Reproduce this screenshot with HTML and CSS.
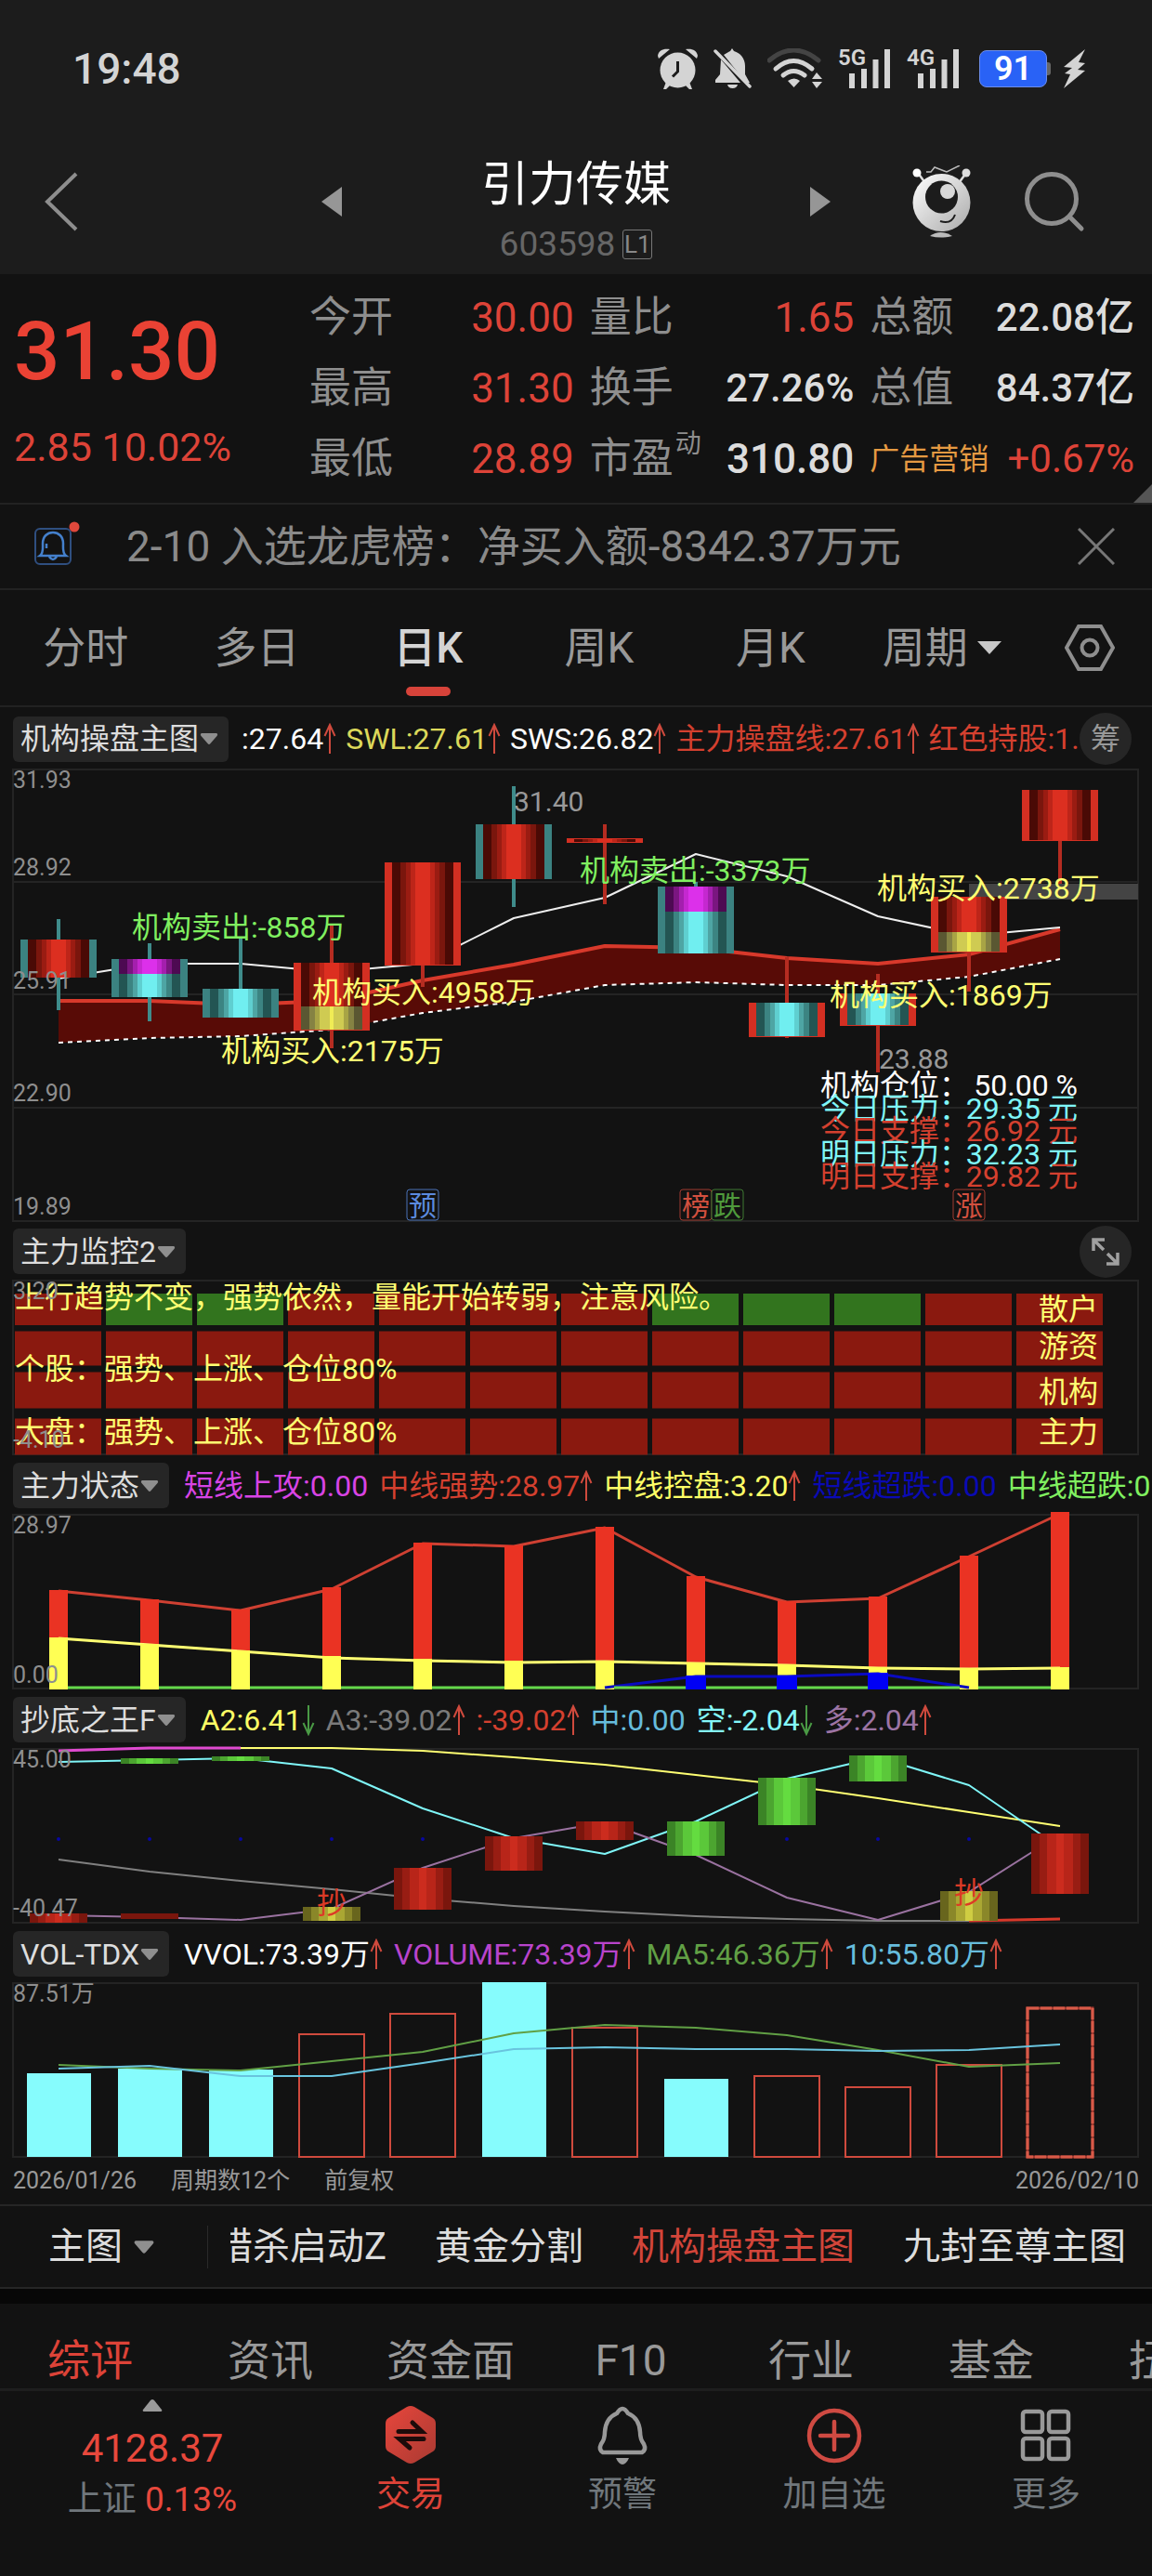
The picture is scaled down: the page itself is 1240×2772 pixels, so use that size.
FILE: index.html
```html
<!DOCTYPE html>
<html lang="zh-CN">
<head>
<meta charset="utf-8">
<meta name="viewport" content="width=device-width, initial-scale=1">
<title>引力传媒 603598</title>
<link rel="stylesheet" href="styles.css">
</head>
<body>
<svg class="defs" width="0" height="0" aria-hidden="true">
  <defs>
    <linearGradient id="red">
      <stop offset="0" stop-color="#4a0a05"/><stop offset=".13" stop-color="#4a0a05"/>
      <stop offset=".13" stop-color="#7a160d"/><stop offset=".22" stop-color="#7a160d"/>
      <stop offset=".22" stop-color="#9a1c12"/><stop offset=".3" stop-color="#9a1c12"/>
      <stop offset=".3" stop-color="#bd2519"/><stop offset=".38" stop-color="#bd2519"/>
      <stop offset=".38" stop-color="#dc2f20"/><stop offset=".62" stop-color="#dc2f20"/>
      <stop offset=".62" stop-color="#bd2519"/><stop offset=".7" stop-color="#bd2519"/>
      <stop offset=".7" stop-color="#9a1c12"/><stop offset=".78" stop-color="#9a1c12"/>
      <stop offset=".78" stop-color="#7a160d"/><stop offset=".87" stop-color="#7a160d"/>
      <stop offset=".87" stop-color="#4a0a05"/><stop offset="1" stop-color="#4a0a05"/>
    </linearGradient>
    <linearGradient id="cyan">
      <stop offset="0" stop-color="#235553"/><stop offset=".13" stop-color="#235553"/>
      <stop offset=".13" stop-color="#3c8482"/><stop offset=".22" stop-color="#3c8482"/>
      <stop offset=".22" stop-color="#4ea5a4"/><stop offset=".3" stop-color="#4ea5a4"/>
      <stop offset=".3" stop-color="#5fcfd0"/><stop offset=".38" stop-color="#5fcfd0"/>
      <stop offset=".38" stop-color="#70eef0"/><stop offset=".62" stop-color="#70eef0"/>
      <stop offset=".62" stop-color="#5fcfd0"/><stop offset=".7" stop-color="#5fcfd0"/>
      <stop offset=".7" stop-color="#4ea5a4"/><stop offset=".78" stop-color="#4ea5a4"/>
      <stop offset=".78" stop-color="#3c8482"/><stop offset=".87" stop-color="#3c8482"/>
      <stop offset=".87" stop-color="#235553"/><stop offset="1" stop-color="#235553"/>
    </linearGradient>
    <linearGradient id="magenta">
      <stop offset="0" stop-color="#4d0a52"/><stop offset=".13" stop-color="#4d0a52"/>
      <stop offset=".13" stop-color="#7a1680"/><stop offset=".22" stop-color="#7a1680"/>
      <stop offset=".22" stop-color="#a41fae"/><stop offset=".3" stop-color="#a41fae"/>
      <stop offset=".3" stop-color="#c528d0"/><stop offset=".38" stop-color="#c528d0"/>
      <stop offset=".38" stop-color="#dc30ea"/><stop offset=".62" stop-color="#dc30ea"/>
      <stop offset=".62" stop-color="#c528d0"/><stop offset=".7" stop-color="#c528d0"/>
      <stop offset=".7" stop-color="#a41fae"/><stop offset=".78" stop-color="#a41fae"/>
      <stop offset=".78" stop-color="#7a1680"/><stop offset=".87" stop-color="#7a1680"/>
      <stop offset=".87" stop-color="#4d0a52"/><stop offset="1" stop-color="#4d0a52"/>
    </linearGradient>
    <linearGradient id="olive">
      <stop offset="0" stop-color="#5a5732"/><stop offset=".13" stop-color="#5a5732"/>
      <stop offset=".13" stop-color="#858243"/><stop offset=".22" stop-color="#858243"/>
      <stop offset=".22" stop-color="#a8a445"/><stop offset=".3" stop-color="#a8a445"/>
      <stop offset=".3" stop-color="#cfcb52"/><stop offset=".47" stop-color="#cfcb52"/>
      <stop offset=".47" stop-color="#f0ec55"/><stop offset=".53" stop-color="#f0ec55"/>
      <stop offset=".53" stop-color="#cfcb52"/><stop offset=".7" stop-color="#cfcb52"/>
      <stop offset=".7" stop-color="#a8a445"/><stop offset=".78" stop-color="#a8a445"/>
      <stop offset=".78" stop-color="#858243"/><stop offset=".87" stop-color="#858243"/>
      <stop offset=".87" stop-color="#5a5732"/><stop offset="1" stop-color="#5a5732"/>
    </linearGradient>
    <linearGradient id="box-red">
      <stop offset="0" stop-color="#7a160d"/><stop offset=".14" stop-color="#7a160d"/>
      <stop offset=".14" stop-color="#981d13"/><stop offset=".28" stop-color="#981d13"/>
      <stop offset=".28" stop-color="#b82519"/><stop offset=".43" stop-color="#b82519"/>
      <stop offset=".43" stop-color="#cc2c1e"/><stop offset=".57" stop-color="#cc2c1e"/>
      <stop offset=".57" stop-color="#b82519"/><stop offset=".72" stop-color="#b82519"/>
      <stop offset=".72" stop-color="#981d13"/><stop offset=".86" stop-color="#981d13"/>
      <stop offset=".86" stop-color="#7a160d"/><stop offset="1" stop-color="#7a160d"/>
    </linearGradient>
    <linearGradient id="box-green">
      <stop offset="0" stop-color="#3b8426"/><stop offset=".14" stop-color="#3b8426"/>
      <stop offset=".14" stop-color="#4ca530"/><stop offset=".28" stop-color="#4ca530"/>
      <stop offset=".28" stop-color="#5bc83a"/><stop offset=".43" stop-color="#5bc83a"/>
      <stop offset=".43" stop-color="#64dc40"/><stop offset=".57" stop-color="#64dc40"/>
      <stop offset=".57" stop-color="#5bc83a"/><stop offset=".72" stop-color="#5bc83a"/>
      <stop offset=".72" stop-color="#4ca530"/><stop offset=".86" stop-color="#4ca530"/>
      <stop offset=".86" stop-color="#3b8426"/><stop offset="1" stop-color="#3b8426"/>
    </linearGradient>
    <linearGradient id="box-olive">
      <stop offset="0" stop-color="#68651d"/><stop offset=".14" stop-color="#68651d"/>
      <stop offset=".14" stop-color="#8a8729"/><stop offset=".28" stop-color="#8a8729"/>
      <stop offset=".28" stop-color="#aaa733"/><stop offset=".43" stop-color="#aaa733"/>
      <stop offset=".43" stop-color="#cfcd42"/><stop offset=".57" stop-color="#cfcd42"/>
      <stop offset=".57" stop-color="#aaa733"/><stop offset=".72" stop-color="#aaa733"/>
      <stop offset=".72" stop-color="#8a8729"/><stop offset=".86" stop-color="#8a8729"/>
      <stop offset=".86" stop-color="#68651d"/><stop offset="1" stop-color="#68651d"/>
    </linearGradient>
    <linearGradient id="silver" x1="0" y1="0" x2="1" y2="1">
      <stop offset="0" stop-color="#fff"/><stop offset="1" stop-color="#aaa"/>
    </linearGradient>
    <linearGradient id="trade" x1="0" y1="0" x2="1" y2="1">
      <stop offset="0" stop-color="#e8463c"/><stop offset="1" stop-color="#a93a32"/>
    </linearGradient>
    <symbol id="up" viewBox="0 0 14 34"><path d="M7 33V3M1.500 14L7 2l5.500 12" fill="none" stroke="#cf4a3d" stroke-width="2"/></symbol>
    <symbol id="down" viewBox="0 0 14 34"><path d="M7 1v30M1.500 20L7 32l5.500-12" fill="none" stroke="#4a9a45" stroke-width="2"/></symbol>
    <symbol id="caret" viewBox="0 0 22 14"><path d="M3 1h16q2 1 .5 3l-7 8q-1.500 2-3 0l-7-8Q1 2 3 1z" fill="#8f8f8f"/></symbol>
  </defs>
</svg>

<header class="top">
  <div class="status">
    <time class="clock">19:48</time>
    <div class="status-icons">
      <svg width="43" height="44" viewBox="0 0 43 44" aria-label="闹钟"><g fill="#d4d4d4"><circle cx="21.500" cy="23.500" r="19"/><path d="M0 8C1 2 6 0 13 1L1 11zM43 8C42 2 37 0 30 1l12 10zM9 36l-3 8h3l5-5zM34 36l3 8h-3l-5-5z"/></g><path d="M21.500 14v11l-5.500 5.500" fill="none" stroke="#1c1c1c" stroke-width="3"/></svg>
      <svg width="41" height="44" viewBox="0 0 41 44" aria-label="静音"><g fill="#d4d4d4"><path d="M11 7c3-2 5-3 7-4l2-3 2 3c7 2 12 8 12 16v9l5 9H35zM8 12l21 25H2v-3l5-6zM15 39h11q-1 4-5.500 4T15 39z"/></g><path d="M2 3l37 38" stroke="#d4d4d4" stroke-width="3.500" stroke-linecap="round"/></svg>
      <svg width="59" height="44" viewBox="0 0 59 44" aria-label="无线网络"><g fill="none" stroke-linecap="round"><path d="M2 13q26-22 53 0" stroke="#444" stroke-width="5"/><path d="M9 22q19-17 39 0M17 29q11-9 23 0" stroke="#d4d4d4" stroke-width="5"/></g><path d="M22 35q7-5 13 0l-6.500 7zM48 33l5-7 6 7zM48 36h11l-6 7z" fill="#d4d4d4"/></svg>
      <span class="signal"><b>5G</b><svg width="45" height="42" viewBox="0 0 45 42"><path d="M3 26v16M16 21v21M28.500 11v31M41 0v42" stroke="#d4d4d4" stroke-width="6"/></svg></span>
      <span class="signal"><b>4G</b><svg width="45" height="42" viewBox="0 0 45 42"><path d="M3 26v16M16 21v21M28.500 11v31M41 0v42" stroke="#d4d4d4" stroke-width="6"/></svg></span>
      <span class="battery">91</span>
      <svg width="26" height="42" viewBox="0 0 26 42" aria-label="充电"><path d="M24 0L1 19l9 1-8 6 6 1-7 15 23-19-8-1 8-7-7-1z" fill="#d4d4d4"/></svg>
    </div>
  </div>
  <nav class="title-bar">
    <button class="back" aria-label="返回"><svg width="36" height="64" viewBox="0 0 36 64"><path d="M34 2L3 32l31 30" fill="none" stroke="#8e8e8e" stroke-width="4"/></svg></button>
    <button class="prev" aria-label="上一只"><svg width="22" height="32" viewBox="0 0 22 32"><path d="M22 0v32L0 16z" fill="#969696"/></svg></button>
    <div class="title">
      <h1>引力传媒</h1>
      <p>603598<span class="level">L1</span></p>
    </div>
    <button class="next" aria-label="下一只"><svg width="22" height="32" viewBox="0 0 22 32"><path d="M0 0v32l22-16z" fill="#969696"/></svg></button>
    <button class="robot" aria-label="助手"><svg width="64" height="78" viewBox="0 0 64 78"><path d="M6 8l8 11M58 8L50 19" stroke="#ddd" stroke-width="2.500"/><circle cx="5" cy="8" r="4.500" fill="#fff"/><circle cx="58" cy="8" r="4.500" fill="#ddd"/><path d="M15 7h5l4-5 13 5 14-7" fill="none" stroke="#bbb" stroke-width="1.500"/><circle cx="31.500" cy="40" r="31" fill="url(#silver)"/><circle cx="31.500" cy="34" r="17.500" fill="#1c1c1c"/><circle cx="38" cy="28" r="8" fill="#d8d8d8"/><path d="M30 60q12 4 16-7" fill="none" stroke="#1c1c1c" stroke-width="2"/><path d="M19 76q11-8 24 0-12 3-24 0z" fill="#bbb"/></svg></button>
    <button class="search" aria-label="搜索"><svg width="66" height="66" viewBox="0 0 66 66"><circle cx="30" cy="30" r="26.500" fill="none" stroke="#8e8e8e" stroke-width="5"/><path d="M49 49l13 13" stroke="#8e8e8e" stroke-width="5" stroke-linecap="round"/></svg></button>
  </nav>
</header>

<main>
  <section class="quote">
    <div class="price">
      <strong>31.30</strong>
      <span>2.85 10.02%</span>
    </div>
    <dl class="stats">
      <div><dt>今开</dt><dd class="rise">30.00</dd></div>
      <div><dt>量比</dt><dd class="rise">1.65</dd></div>
      <div><dt>总额</dt><dd class="small">22.08亿</dd></div>
      <div><dt>最高</dt><dd class="rise">31.30</dd></div>
      <div><dt>换手</dt><dd class="small">27.26%</dd></div>
      <div><dt>总值</dt><dd class="small">84.37亿</dd></div>
      <div><dt>最低</dt><dd class="rise">28.89</dd></div>
      <div><dt>市盈<sup>动</sup></dt><dd>310.80</dd></div>
      <div><dt class="sector">广告营销</dt><dd class="rise small">+0.67%</dd></div>
    </dl>
    <i class="corner"></i>
  </section>

  <section class="notice">
    <svg width="52" height="50" viewBox="0 0 52 50" aria-hidden="true"><rect x="2" y="9" width="38" height="38" rx="5" fill="none" stroke="#2f4f80" stroke-width="2"/><path d="M7 38c4-3 3-8 3-13 0-8 5-12 11-12s11 4 11 12c0 5-1 10 3 13zM17 39q4 6 8 0M14 25v5" fill="none" stroke="#4480cc" stroke-width="2.500"/><circle cx="44" cy="7" r="5.500" fill="#e0483c"/></svg>
    <a href="#lhb">2-10 入选龙虎榜：净买入额-8342.37万元</a>
    <button aria-label="关闭"><svg width="40" height="40" viewBox="0 0 40 40"><path d="M1 1l38 38M39 1L1 39" stroke="#777" stroke-width="3"/></svg></button>
  </section>

  <nav class="periods">
    <button>分时</button>
    <button>多日</button>
    <button class="active">日K</button>
    <button>周K</button>
    <button>月K</button>
    <button>周期<svg width="26" height="14" viewBox="0 0 26 14"><path d="M0 0h26L13 14z" fill="#c8c8c8"/></svg></button>
    <button class="setting" aria-label="设置"><svg width="54" height="50" viewBox="0 0 54 50"><path d="M15 2h24l13 23-13 23H15L2 25z" fill="none" stroke="#8e8e8e" stroke-width="4"/><circle cx="27" cy="25" r="8.500" fill="none" stroke="#8e8e8e" stroke-width="4"/></svg></button>
  </nav>

  <section class="panel main-panel">
    <div class="panel-head">
      <button class="tag">机构操盘主图<svg><use href="#caret"/></svg></button>
      <div class="readout">
        <span class="c-white">:27.64<svg><use href="#up"/></svg></span>
        <span class="c-gold">SWL:27.61<svg><use href="#up"/></svg></span>
        <span class="c-white">SWS:26.82<svg><use href="#up"/></svg></span>
        <span class="c-red">主力操盘线:27.61<svg><use href="#up"/></svg></span>
        <span class="c-red">红色持股:1.00</span>
      </div>
      <button class="round">筹</button>
    </div>
    <svg class="chart" viewBox="0 0 1240 487">
      <g class="grid"><rect x="14" y="1" width="1211" height="486"/><path d="M14 122H1225M14 243H1225M14 365H1225"/></g>
      <rect x="1043" y="124" width="182" height="17" fill="#444"/>
      <path fill="#580b06" d="M63 250L161 250 259 254 357 250 455 228 553 211 651 191 749 193 847 204 945 210 1043 200 1141 173V205L1043 224 945 233 847 233 749 230 651 233 553 251 455 263 357 281 259 288 161 290 63 295z"/>
      <path class="line" stroke="#d8392b" stroke-width="4" d="M63 250L161 250 259 254 357 250 455 228 553 211 651 191 749 193 847 204 945 210 1043 200 1141 173"/>
      <path class="line" stroke="#fff" stroke-width="2" stroke-dasharray="5 5" d="M63 295L161 290 259 288 357 281 455 263 553 251 651 233 749 230 847 233 945 233 1043 224 1141 205"/>
      <path class="line" stroke="#eee" stroke-width="2" d="M63 226L161 210 259 210 357 219 455 210 553 161 651 139 749 92 847 116 945 159 1043 180 1141 171"/>
      <path stroke="#3f8c8b" stroke-width="4" d="M63 162V260M161 188V272M259 183V268M553 19V149M749 122V199"/>
      <path stroke="#b52c21" stroke-width="4" d="M357 169V301M455 101V235M651 60V146M847 203V290M945 221V327M1043 138V240M1141 23V124"/>
      <g fill="#3b8281"><rect x="22" y="184" width="82" height="41"/><rect x="120" y="205" width="82" height="41"/><rect x="218" y="237" width="82" height="31"/><rect x="512" y="60" width="82" height="59"/><rect x="708" y="127" width="82" height="72"/></g>
      <g fill="#d32f22"><rect x="316" y="209" width="82" height="73"/><rect x="414" y="101" width="82" height="111"/><rect x="610" y="75" width="82" height="5"/><rect x="806" y="252" width="82" height="37"/><rect x="904" y="242" width="82" height="35"/><rect x="1002" y="138" width="82" height="60"/><rect x="1100" y="23" width="82" height="55"/></g>
      <g fill="url(#red)"><rect x="30" y="184" width="66" height="41"/><rect x="324" y="209" width="66" height="47"/><rect x="422" y="101" width="66" height="110"/><rect x="520" y="60" width="66" height="59"/><rect x="618" y="76" width="66" height="3"/><rect x="1010" y="138" width="66" height="38"/><rect x="1108" y="23" width="66" height="54"/></g>
      <g fill="url(#cyan)"><rect x="128" y="221" width="66" height="25"/><rect x="226" y="237" width="66" height="31"/><rect x="716" y="154" width="66" height="45"/><rect x="814" y="252" width="66" height="36"/><rect x="912" y="242" width="66" height="34"/></g>
      <g fill="url(#magenta)"><rect x="128" y="205" width="66" height="16"/><rect x="716" y="127" width="66" height="27"/></g>
      <g fill="url(#olive)"><rect x="324" y="256" width="66" height="25"/><rect x="1010" y="176" width="66" height="21"/></g>
      <g class="axis"><text x="14" y="21">31.93</text><text x="14" y="115">28.92</text><text x="14" y="237">25.91</text><text x="14" y="358">22.90</text><text x="14" y="480">19.89</text></g>
      <g class="extreme"><text x="553" y="46">31.40</text><text x="946" y="323">23.88</text></g>
      <g class="note" fill="#80f060"><text x="142" y="182">机构卖出:-858万</text><text x="624" y="121">机构卖出:-3373万</text></g>
      <g class="note" fill="#ffff72"><text x="336" y="252">机构买入:4958万</text><text x="238" y="315">机构买入:2175万</text><text x="944" y="140">机构买入:2738万</text><text x="893" y="255">机构买入:1869万</text></g>
      <g class="note">
        <g fill="#fff"><text x="883" y="352">机构仓位：</text><text x="1160" y="352" class="end">50.00 %</text></g>
        <g fill="#7ff6f8"><text x="883" y="377">今日压力：</text><text x="1160" y="377" class="end">29.35 元</text></g>
        <g fill="#d4402f"><text x="883" y="401">今日支撑：</text><text x="1160" y="401" class="end">26.92 元</text></g>
        <g fill="#7ff6f8"><text x="883" y="426">明日压力：</text><text x="1160" y="426" class="end">32.23 元</text></g>
        <g fill="#d4402f"><text x="883" y="450">明日支撑：</text><text x="1160" y="450" class="end">29.82 元</text></g>
      </g>
      <g class="badge">
        <rect x="438" y="453" width="34" height="33" rx="3" stroke="#4a72b8"/><text x="455" y="481" fill="#5b8ade">预</text>
        <rect x="732" y="453" width="34" height="33" rx="3" stroke="#a03a30"/><text x="749" y="481" fill="#d2503f">榜</text>
        <rect x="766" y="453" width="34" height="33" rx="3" stroke="#3f7a32"/><text x="783" y="481" fill="#4f9a3c">跌</text>
        <rect x="1026" y="453" width="34" height="33" rx="3" stroke="#a03a30"/><text x="1043" y="481" fill="#d2503f">涨</text>
      </g>
    </svg>
  </section>

  <section class="panel">
    <div class="panel-head">
      <button class="tag">主力监控2<svg><use href="#caret"/></svg></button>
      <div class="readout"></div>
      <button class="round" aria-label="展开"><svg width="30" height="30" viewBox="0 0 30 30"><path d="M2 14V2h12M3 3l10 10M28 16v12H16M27 27L17 17" fill="none" stroke="#a0a0a0" stroke-width="3.500"/></svg></button>
    </div>
    <svg class="chart" viewBox="0 0 1240 189">
      <g class="grid"><rect x="14" y="1" width="1211" height="187"/></g>
      <path stroke="#8a190f" stroke-width="34" stroke-dasharray="93 5" d="M16 32H1188"/>
      <path stroke="#32741e" stroke-width="34" stroke-dasharray="93 5" d="M114 32H305M702 32H991"/>
      <path stroke="#8a190f" stroke-width="37" stroke-dasharray="93 5" d="M16 74H1188"/>
      <path stroke="#8a190f" stroke-width="39" stroke-dasharray="93 5" d="M16 119H1188M16 169H1188"/>
      <g class="note" fill="#ffff72">
        <text x="16" y="30">上行趋势不变，强势依然，量能开始转弱，注意风险。</text>
        <text x="16" y="107">个股：强势、上涨、仓位80%</text>
        <text x="16" y="175">大盘：强势、上涨、仓位80%</text>
        <text x="1118" y="43">散户</text><text x="1118" y="83">游资</text><text x="1118" y="132">机构</text><text x="1118" y="175">主力</text>
      </g>
      <g class="axis"><text x="14" y="21">3.20</text><text x="14" y="181">-4.10</text></g>
    </svg>
  </section>

  <section class="panel">
    <div class="panel-head">
      <button class="tag">主力状态<svg><use href="#caret"/></svg></button>
      <div class="readout">
        <span class="c-magenta">短线上攻:0.00</span>
        <span class="c-red">中线强势:28.97<svg><use href="#up"/></svg></span>
        <span class="c-yellow">中线控盘:3.20<svg><use href="#up"/></svg></span>
        <span class="c-navy">短线超跌:0.00</span>
        <span class="c-green">中线超跌:0.00</span>
      </div>
    </div>
    <svg class="chart" viewBox="0 0 1240 189">
      <g class="grid"><rect x="14" y="1" width="1211" height="187"/></g>
      <path class="line" stroke="#cf4032" stroke-width="3" d="M63 83L161 93 259 104 357 81 455 32 553 35 651 15 749 68 847 95 945 91 1043 46 1141 0"/>
      <path stroke="#ea3323" stroke-width="20" d="M63 82V189M161 92V189M259 103V189M357 79V189M455 31V189M553 34V189M651 14V189M749 67V189M847 94V189M945 89V189M1043 45V189M1141 -2V189"/>
      <path class="line" stroke="#ffff72" stroke-width="3" d="M63 134L161 141 259 148 357 155 455 158 553 160 651 159 749 161 847 163 945 166 1043 167 1141 166"/>
      <path stroke="#ffff54" stroke-width="20" d="M63 133V189M161 140V189M259 147V189M357 153V189M455 156V189M553 158V189M651 158V189M749 160V189M847 162V189M945 165V189M1043 166V189M1141 165V189"/>
      <path class="line" stroke="#0a0ac0" stroke-width="3" d="M651 187L749 175 847 175 945 172 1043 187"/>
      <path class="line" stroke="#64d84a" stroke-width="3" d="M73 187H151M171 187H249M269 187H347M367 187H445M465 187H543M563 187H641M661 187H1033M1053 187H1131"/>
      <path stroke="#0000f5" stroke-width="22" d="M749 174V189M847 174V189M945 171V189"/>
      <g class="axis"><text x="14" y="21">28.97</text><text x="14" y="182">0.00</text></g>
    </svg>
  </section>

  <section class="panel">
    <div class="panel-head">
      <button class="tag">抄底之王F<svg><use href="#caret"/></svg></button>
      <div class="readout">
        <span class="c-yellow">A2:6.41<svg><use href="#down"/></svg></span>
        <span class="c-gray">A3:-39.02<svg><use href="#up"/></svg></span>
        <span class="c-red">:-39.02<svg><use href="#up"/></svg></span>
        <span class="c-blue">中:0.00</span>
        <span class="c-cyan">空:-2.04<svg><use href="#down"/></svg></span>
        <span class="c-purple">多:2.04<svg><use href="#up"/></svg></span>
      </div>
    </div>
    <svg class="chart" viewBox="0 0 1240 189">
      <g class="grid"><rect x="14" y="1" width="1211" height="187"/></g>
      <g fill="#0808a0"><circle cx="63" cy="98" r="2"/><circle cx="161" cy="98" r="2"/><circle cx="259" cy="98" r="2"/><circle cx="357" cy="98" r="2"/><circle cx="455" cy="98" r="2"/><circle cx="847" cy="98" r="2"/><circle cx="945" cy="98" r="2"/><circle cx="1043" cy="98" r="2"/></g>
      <path class="line" stroke="#ffff72" stroke-width="2" d="M259 0L357 0 455 3 553 10 651 18 749 29 847 40 945 54 1043 69 1141 84"/>
      <path class="line" stroke="#e04ad0" stroke-width="3" d="M63 3L161 0 259 0"/>
      <path class="line" stroke="#808080" stroke-width="2" d="M63 120L161 133 259 143 357 152 455 162 553 170 651 176 749 181 847 184 945 186 1043 186"/>
      <path class="line" stroke="#d8392b" stroke-width="3" d="M1043 186L1141 184"/>
      <path class="line" stroke="#7ff6f8" stroke-width="2" d="M63 15L161 13 259 11 357 22 455 65 553 97 651 114 749 79 847 33 945 10 1043 40 1141 107"/>
      <path class="line" stroke="#9a72a0" stroke-width="2" d="M63 180L161 182 259 185 357 173 455 129 553 97 651 80 749 115 847 161 945 185 1043 155 1141 93"/>
      <rect x="130" y="178" width="62" height="6" fill="#7a160d"/>
      <g fill="url(#box-red)"><rect x="32" y="178" width="62" height="10"/><rect x="424" y="129" width="62" height="45"/><rect x="522" y="95" width="62" height="37"/><rect x="620" y="79" width="62" height="20"/><rect x="1110" y="92" width="62" height="65"/></g>
      <g fill="url(#box-green)"><rect x="130" y="11" width="62" height="6"/><rect x="228" y="9" width="62" height="5"/><rect x="718" y="79" width="62" height="37"/><rect x="816" y="32" width="62" height="51"/><rect x="914" y="8" width="62" height="28"/></g>
      <g fill="url(#box-olive)"><rect x="326" y="171" width="62" height="15"/><rect x="1012" y="154" width="62" height="32"/></g>
      <g class="note" fill="#dc3a26"><text x="341" y="178">抄</text><text x="1027" y="167">抄</text></g>
      <g class="axis"><text x="14" y="21">45.00</text><text x="14" y="181">-40.47</text></g>
    </svg>
  </section>

  <section class="panel">
    <div class="panel-head">
      <button class="tag">VOL-TDX<svg><use href="#caret"/></svg></button>
      <div class="readout">
        <span class="c-white">VVOL:73.39万<svg><use href="#up"/></svg></span>
        <span class="c-violet">VOLUME:73.39万<svg><use href="#up"/></svg></span>
        <span class="c-leaf">MA5:46.36万<svg><use href="#up"/></svg></span>
        <span class="c-blue">10:55.80万<svg><use href="#up"/></svg></span>
      </div>
    </div>
    <svg class="chart" viewBox="0 0 1240 189">
      <g class="grid"><rect x="14" y="1" width="1211" height="187"/></g>
      <g fill="#86fcfd"><rect x="29" y="98" width="69" height="90"/><rect x="127" y="93" width="69" height="95"/><rect x="225" y="94" width="69" height="94"/><rect x="519" y="0" width="69" height="188"/><rect x="715" y="104" width="69" height="84"/></g>
      <g fill="none" stroke="#cf4a3d" stroke-width="2"><rect x="322" y="56" width="70" height="132"/><rect x="420" y="34" width="70" height="154"/><rect x="616" y="49" width="70" height="139"/><rect x="812" y="101" width="70" height="87"/><rect x="910" y="113" width="70" height="75"/><rect x="1008" y="89" width="70" height="99"/><rect x="1106" y="28" width="70" height="160" stroke="#a83c32" stroke-width="3"/><rect x="1106" y="28" width="70" height="160" stroke="#d85a48" stroke-width="3" stroke-dasharray="12 2"/></g>
      <path class="line" stroke="#61a045" stroke-width="2" d="M63 89L161 93 259 95 357 85 455 75 553 55 651 46 749 49 847 57 945 73 1043 91 1141 87"/>
      <path class="line" stroke="#69c4de" stroke-width="2" d="M63 93L161 90 259 101 357 101 455 87 553 72 651 70 749 72 847 72 945 74 1043 73 1141 67"/>
      <g class="axis"><text x="14" y="21">87.51万</text></g>
    </svg>
    <div class="dates"><span>2026/01/26</span><span>周期数12个</span><span>前复权</span><span class="last">2026/02/10</span></div>
  </section>

  <nav class="formulas">
    <button class="kind">主图<svg><use href="#caret"/></svg></button>
    <div class="formula-list">
      <button>惜杀启动Z</button><button>黄金分割</button><button class="active">机构操盘主图</button><button>九封至尊主图</button>
    </div>
  </nav>

  <nav class="tabs">
    <a href="#summary" class="active">综评</a><a href="#news">资讯</a><a href="#funds">资金面</a><a href="#f10">F10</a><a href="#industry">行业</a><a href="#fund">基金</a><a href="#turn">扭亏</a>
  </nav>
</main>

<footer class="bottom">
  <button class="index">
    <svg width="22" height="13" viewBox="0 0 22 13"><path d="M9 1q2-2 4 0l8 10q1 2-1 2H2q-2 0-1-2z" fill="#9a9a9a"/></svg>
    <strong>4128.37</strong>
    <span>上证 <em>0.13%</em></span>
  </button>
  <button class="hot"><svg width="64" height="64" viewBox="0 0 64 64"><path d="M28 2q4-2 8 0l20 12q3 2 3 6v24q0 4-3 6L36 62q-4 2-8 0L8 50q-3-2-3-6V20q0-4 3-6z" fill="url(#trade)"/><path d="M19 28.500h25L34 19M46 36.500H20L31 46" fill="none" stroke="#1d0b0a" stroke-width="5" stroke-linecap="round"/></svg>交易</button>
  <button><svg width="64" height="64" viewBox="0 0 64 64"><path d="M11 51q-5-3-2-9 4-5 4-13 1-15 13-20 6-10 12 0 12 5 13 20 0 8 4 13 3 6-2 9z" fill="none" stroke="#999" stroke-width="4.500"/><path d="M25 57h14q-3 7-7 7t-7-7z" fill="#999"/></svg>预警</button>
  <button><svg width="64" height="64" viewBox="0 0 64 64"><g fill="none" stroke="#cf4a42" stroke-width="4.500"><circle cx="32" cy="33" r="27"/><path d="M32 18v30M17 33h30" stroke-linecap="round"/></g></svg>加自选</button>
  <button><svg width="64" height="64" viewBox="0 0 64 64"><g fill="none" stroke="#999" stroke-width="4.500"><rect x="7" y="7" width="21" height="22" rx="3"/><rect x="35" y="7" width="21" height="22" rx="3"/><rect x="7" y="36" width="21" height="22" rx="3"/><rect x="35" y="36" width="21" height="22" rx="3"/></g></svg>更多</button>
</footer>
</body>
</html>
```

FILE: styles.css
```css
* { box-sizing: border-box; }

body {
  margin: 0;
  background: #121212;
  color: #999;
  font-family: Roboto, "Noto Sans CJK SC", sans-serif;
  overflow-x: hidden;
}

button {
  margin: 0;
  padding: 0;
  border: 0;
  background: none;
  color: inherit;
  font: inherit;
  white-space: nowrap;
}

a { color: inherit; text-decoration: none; }
svg { display: block; flex: none; }
.defs { position: absolute; }

/* status bar and title */
.top { background: #1c1c1c; height: 295px; }
.status {
  display: flex;
  align-items: center;
  justify-content: space-between;
  height: 148px;
  padding: 0 70px 0 78px;
}
.clock { font-size: 46px; font-weight: 500; color: #d4d4d4; }
.status-icons { display: flex; align-items: center; gap: 17px; }
.signal { display: flex; align-items: flex-start; position: relative; padding-left: 12px; }
.signal b {
  position: absolute;
  left: 0;
  top: 0;
  font-size: 24px;
  font-weight: 600;
  line-height: 18px;
  color: #d4d4d4;
}
.battery {
  position: relative;
  width: 73px;
  height: 40px;
  margin-left: 4px;
  border: 1px solid #6c8ce8;
  border-radius: 8px;
  background: #2962f6;
  color: #fff;
  font-size: 36px;
  font-weight: 600;
  line-height: 38px;
  text-align: center;
}
.battery::after {
  content: "";
  position: absolute;
  left: 72px;
  top: 12px;
  width: 4px;
  height: 14px;
  border-radius: 0 3px 3px 0;
  background: #666;
}
.title-bar {
  display: grid;
  grid-template-columns: 346fr 22px 504fr 22px 88fr 64px 56fr 66px 72fr;
  grid-template-rows: 137px;
  align-items: center;
}
.back { grid-column: 1; padding-left: 48px; justify-self: start; }
.prev { grid-column: 2; }
.title { grid-column: 3; padding-top: 24px; text-align: center; }
.next { grid-column: 4; }
.robot { grid-column: 6; }
.search { grid-column: 8; }
.title h1 { margin: 0; font-size: 51px; font-weight: 400; line-height: 68px; color: #fff; }
.title p {
  display: flex;
  align-items: center;
  justify-content: center;
  gap: 8px;
  margin: 0;
  font-size: 37px;
  line-height: 60px;
  color: #666;
}
.level {
  width: 32px;
  height: 32px;
  border: 1px solid #777;
  border-radius: 3px;
  color: #888;
  font-size: 26px;
  line-height: 31px;
}

/* quote summary */
.quote {
  position: relative;
  display: grid;
  grid-template-columns: 316fr 888fr;
  column-gap: 17px;
  height: 248px;
  padding: 9px 19px 0 0;
  border-bottom: 2px solid #222;
}
.price { padding-left: 15px; color: #dd4338; white-space: nowrap; }
.price strong { display: block; padding-top: 14px; font-size: 87px; font-weight: 500; line-height: 120px; color: #ea4234; }
.price span { display: block; padding-top: 18px; font-size: 43px; line-height: 50px; }
.stats {
  display: grid;
  grid-template-columns: 1fr 1fr 1fr;
  grid-auto-rows: 76px;
  column-gap: 17px;
  margin: 0;
  line-height: 60px;
}
.stats div { display: flex; align-items: center; justify-content: space-between; white-space: nowrap; }
.stats dt { position: relative; font-size: 45px; color: #8e8e8e; }
.stats sup { position: absolute; left: 92px; top: 0; font-size: 28px; line-height: 28px; }
.stats dd { margin: 0; font-size: 44px; font-weight: 500; color: #ddd; }
.stats dd.small { font-size: 42px; }
.stats dd.rise { color: #dd4338; font-weight: 400; }
.stats .sector { font-size: 32px; color: #e59a42; }
.corner {
  position: absolute;
  right: 0;
  bottom: 0;
  border-style: solid;
  border-color: transparent transparent #555;
  border-width: 0 0 20px 20px;
}

.notice {
  display: flex;
  align-items: center;
  height: 92px;
  padding: 0 40px 0 36px;
  border-bottom: 2px solid #222;
  font-size: 46px;
  line-height: 60px;
}
.notice svg { margin-bottom: 6px; }
.notice a { flex: 1; padding-left: 48px; color: #8a8a8a; white-space: nowrap; }
.notice button svg { margin: 0; }

.periods {
  display: grid;
  grid-template-columns: repeat(6, 184fr) 134fr;
  height: 126px;
  border-bottom: 2px solid #222;
  font-size: 46px;
  line-height: 60px;
}
.periods button {
  position: relative;
  display: flex;
  align-items: center;
  justify-content: center;
  gap: 10px;
}
.periods .active { color: #d4d4d4; font-weight: 500; }
.periods .active::after {
  content: "";
  position: absolute;
  bottom: 10px;
  width: 48px;
  height: 10px;
  border-radius: 5px;
  background: #d7433a;
}

/* indicator panels */
.panel-head { display: flex; align-items: center; height: 63px; font-size: 32px; line-height: 48px; padding: 2px 0 0 14px; }
.main-panel .panel-head { height: 66px; }
.main-panel .readout { gap: 10px; padding-left: 14px; }
.tag {
  display: flex;
  align-items: center;
  height: 49px;
  padding: 0 10px 0 8px;
  border-radius: 6px;
  background: #262626;
  color: #ddd;
}
.tag svg { width: 22px; height: 14px; }
.readout {
  display: flex;
  flex: 1;
  gap: 12px;
  min-width: 0;
  padding-left: 16px;
  overflow: hidden;
  white-space: nowrap;
}
.readout span { display: flex; align-items: center; flex: none; }
.readout svg { width: 14px; height: 34px; }
.round {
  display: grid;
  place-items: center;
  width: 56px;
  height: 56px;
  margin-right: 22px;
  border-radius: 50%;
  background: #262626;
  color: #999;
}
.c-white { color: #fff; }
.c-gold { color: #dcd85a; }
.c-yellow { color: #ffff66; }
.c-red { color: #d4402f; }
.c-magenta { color: #d844e4; }
.c-violet { color: #b944cc; }
.c-navy { color: #0a0ab4; }
.c-green { color: #80f060; }
.c-leaf { color: #61a045; }
.c-gray { color: #7a7a7a; }
.c-blue { color: #66bcdc; }
.c-cyan { color: #84f8fa; }
.c-purple { color: #9c74a4; }

.chart { width: 100%; height: auto; overflow: visible; }
.grid { fill: none; stroke: #242424; stroke-width: 2; }
.line { fill: none; stroke-linejoin: round; }
.axis { font-size: 25px; fill: #8e8e8e; }
.extreme { font-size: 30px; fill: #999; }
.note { font-size: 32px; }
.note .end { text-anchor: end; }
.badge rect { fill: #121212; }
.badge text { font-size: 30px; text-anchor: middle; }

.dates {
  display: flex;
  gap: 37px;
  padding: 0 14px;
  font-size: 25px;
  line-height: 50px;
}
.dates .last { margin-left: auto; }

/* formula switcher */
.formulas {
  display: flex;
  align-items: center;
  height: 91px;
  border-top: 2px solid #262626;
  border-bottom: 2px solid #262626;
  font-size: 40px;
  line-height: 58px;
  color: #ddd;
}
.kind {
  display: flex;
  align-items: center;
  gap: 10px;
  width: 224px;
  height: 46px;
  padding-left: 52px;
  border-right: 1px solid #2a2a2a;
}
.kind svg { width: 26px; height: 16px; }
.formula-list {
  display: flex;
  flex: 1;
  justify-content: flex-end;
  gap: 52px;
  min-width: 0;
  margin-left: 24px;
  padding-right: 28px;
  overflow: hidden;
}
.formulas .active { color: #d2453a; }

.tabs {
  display: flex;
  height: 110px;
  padding-top: 16px;
  border-top: 16px solid #070707;
  border-bottom: 3px solid #1e1e1e;
  font-size: 46px;
  line-height: 90px;
  overflow: hidden;
}
.tabs a { flex: 0 0 194px; text-align: center; white-space: nowrap; }
.tabs .active { color: #dd4338; }

.bottom {
  display: grid;
  grid-template-columns: 328fr repeat(4, 228fr);
  height: 199px;
  padding-bottom: 48px;
  font-size: 37px;
  color: #70777c;
}
.bottom button { display: flex; flex-direction: column; align-items: center; padding-top: 15px; line-height: 66px; }
.bottom .index { padding-top: 9px; }
.bottom .index strong { padding-top: 8px; font-size: 42px; font-weight: 400; line-height: 64px; color: #e8483c; }
.bottom .index span { line-height: 46px; }
.bottom em { font-style: normal; color: #e8483c; }
.bottom .hot { color: #dd4338; }
```
